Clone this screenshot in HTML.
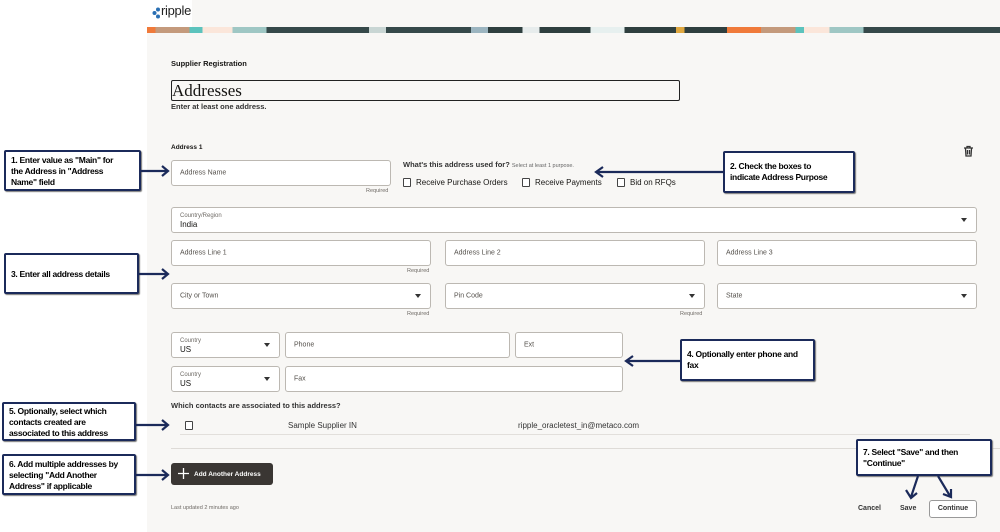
<!DOCTYPE html>
<html><head><meta charset="utf-8"><style>
*{margin:0;padding:0;box-sizing:border-box}
body{width:1000px;height:532px;position:relative;background:#fff;font-family:"Liberation Sans",sans-serif;overflow:hidden;color:#161513}
.a{position:absolute}
.pg{left:147px;top:0;width:853px;height:532px;background:#f8f7f5}
.in{position:absolute;background:#fff;border:1px solid #bcb8b2;border-radius:3px;font-size:7px;color:#55514c}
.in span{position:absolute;left:8px;top:50%;transform:translateY(-50%)}
.lab{position:absolute;left:8px;top:5px;font-size:6px;color:#6f6b66}
.val{position:absolute;left:8px;top:12px;font-size:8px;color:#161513}
.dd{position:absolute;right:9px;top:50%;transform:translateY(-50%);width:0;height:0;border-left:3px solid transparent;border-right:3px solid transparent;border-top:4px solid #333}
.req{position:absolute;font-size:5.5px;color:#6f6b66}
.co{position:absolute;background:#fff;border:2px solid #1b2a5a;border-radius:2px;font-size:8.5px;letter-spacing:-0.3px;font-weight:bold;line-height:11px;padding:3px 5px;color:#000;box-shadow:1px 1px 1px #777;white-space:nowrap}
.cb{position:absolute;width:8px;height:9px;border:1px solid #444;border-radius:1px;background:#fff}
.t{position:absolute;font-size:8px;white-space:nowrap}
</style></head><body>
<div class="a pg"></div>
<div class="a" style="left:147px;top:0;width:45px;height:27px;background:#fff"></div>
<svg class="a" style="left:152px;top:7px" width="9" height="12"><g fill="#2a6fb3"><circle cx="6" cy="2.5" r="2"/><circle cx="2.5" cy="6" r="2"/><circle cx="6" cy="9.5" r="2"/></g></svg>
<div class="a" style="left:161px;top:3px;font-size:13px;color:#222;letter-spacing:-0.3px">ripple</div>
<div class="a" style="left:147px;top:27px;width:853px;height:6px;background:linear-gradient(90deg,#f07a3a 0 1%,#c49a7c 1% 5%,#5cc3bd 5% 6.5%,#fbe6da 6.5% 10%,#9fc7c4 10% 14%,#36494a 14% 26%,#c9d6d4 26% 28%,#36494a 28% 38%,#9cb5c0 38% 40%,#2f3f3f 40% 44%,#e7ecec 44% 46%,#2f3f3f 46% 52%,#e7f0ef 52% 56%,#2f3f3f 56% 62%,#e0a840 62% 63%,#2f3f3f 63% 68%,#f07a3a 68% 72%,#c49a7c 72% 76%,#5cc3bd 76% 77%,#fbe6da 77% 80%,#9fc7c4 80% 84%,#36494a 84% 100%)"></div>
<div class="t" style="left:171px;top:59px;font-weight:bold;font-size:7.5px">Supplier Registration</div>
<div class="a" style="left:171px;top:80px;width:509px;height:21px;border:1px solid #222;border-radius:2px;font-family:'Liberation Serif',serif;font-size:17px;line-height:19px">Addresses</div>
<div class="t" style="left:171px;top:102px;font-size:7.5px;font-weight:bold;color:#333">Enter at least one address.</div>
<div class="t" style="left:171px;top:144px;font-size:6.5px;font-weight:bold">Address 1</div>
<svg class="a" style="left:963px;top:145px" width="11" height="12" fill="none" stroke="#333" stroke-width="1.3"><path d="M1 3H10M4 3V1.5H7V3M2.5 3.5L3 11H8L8.5 3.5M4.5 5V9.5M6.5 5V9.5"/></svg>
<div class="in" style="left:171px;top:160px;width:220px;height:26px"><span>Address Name</span></div>
<div class="req" style="left:366px;top:188px">Required</div>
<div class="t" style="left:403px;top:160px;font-size:7.5px;font-weight:bold;color:#333">What's this address used for? <span style="font-weight:normal;font-size:5.5px;color:#666">Select at least 1 purpose.</span></div>
<div class="cb" style="left:403px;top:178px"></div><div class="t" style="left:416px;top:178px">Receive Purchase Orders</div>
<div class="cb" style="left:522px;top:178px"></div><div class="t" style="left:535px;top:178px">Receive Payments</div>
<div class="cb" style="left:617px;top:178px"></div><div class="t" style="left:630px;top:178px">Bid on RFQs</div>
<div class="in" style="left:171px;top:207px;width:806px;height:26px"><div class="lab">Country/Region</div><div class="val">India</div><div class="dd"></div></div>
<div class="in" style="left:171px;top:240px;width:260px;height:26px"><span>Address Line 1</span></div>
<div class="in" style="left:445px;top:240px;width:260px;height:26px"><span>Address Line 2</span></div>
<div class="in" style="left:717px;top:240px;width:260px;height:26px"><span>Address Line 3</span></div>
<div class="req" style="left:407px;top:268px">Required</div>
<div class="in" style="left:171px;top:283px;width:260px;height:26px"><span>City or Town</span><div class="dd"></div></div>
<div class="in" style="left:445px;top:283px;width:260px;height:26px"><span>Pin Code</span><div class="dd"></div></div>
<div class="in" style="left:717px;top:283px;width:260px;height:26px"><span>State</span><div class="dd"></div></div>
<div class="req" style="left:407px;top:311px">Required</div>
<div class="req" style="left:680px;top:311px">Required</div>
<div class="in" style="left:171px;top:332px;width:109px;height:26px"><div class="lab">Country</div><div class="val">US</div><div class="dd"></div></div>
<div class="in" style="left:285px;top:332px;width:225px;height:26px"><span>Phone</span></div>
<div class="in" style="left:515px;top:332px;width:108px;height:26px"><span>Ext</span></div>
<div class="in" style="left:171px;top:366px;width:109px;height:26px"><div class="lab">Country</div><div class="val">US</div><div class="dd"></div></div>
<div class="in" style="left:285px;top:366px;width:338px;height:26px"><span>Fax</span></div>
<div class="t" style="left:171px;top:401px;font-size:7.5px;font-weight:bold;color:#333">Which contacts are associated to this address?</div>
<div class="cb" style="left:185px;top:421px"></div>
<div class="t" style="left:288px;top:421px;color:#333">Sample Supplier IN</div>
<div class="t" style="left:518px;top:421px;color:#333">ripple_oracletest_in@metaco.com</div>
<div class="a" style="left:180px;top:434px;width:790px;height:1px;background:#e2dfdb"></div>
<div class="a" style="left:171px;top:448px;width:829px;height:1px;background:#dedbd7"></div>
<div class="a" style="left:171px;top:463px;width:102px;height:22px;background:#3a3633;border-radius:3px;color:#fff;font-size:6.5px;font-weight:bold"><svg class="a" style="left:7px;top:5px" width="11" height="11" stroke="#fff" stroke-width="1.3"><path d="M5.5 0V11M0 5.5H11"/></svg><span style="position:absolute;left:23px;top:8px">Add Another Address</span></div>
<div class="t" style="left:171px;top:505px;font-size:5.5px;color:#6f6b66">Last updated 2 minutes ago</div>
<div class="t" style="left:858px;top:505px;font-size:7px;font-weight:bold;color:#333">Cancel</div>
<div class="t" style="left:900px;top:505px;font-size:7px;font-weight:bold;color:#333">Save</div>
<div class="a" style="left:929px;top:500px;width:48px;height:18px;border:1px solid #999;border-radius:3px;background:#fff;font-size:7px;font-weight:bold;color:#333;text-align:center;line-height:16px">Continue</div>
<div class="co" style="left:4px;top:150px;width:137px;height:41px">1. Enter value as "Main" for<br>the Address in "Address<br>Name" field</div>
<div class="co" style="left:723px;top:151px;width:132px;height:42px;padding-top:8px">2. Check the boxes to<br>indicate Address Purpose</div>
<div class="co" style="left:4px;top:253px;width:135px;height:41px;padding-top:14px">3. Enter all address details</div>
<div class="co" style="left:680px;top:339px;width:135px;height:42px;padding-top:8px">4. Optionally enter phone and<br>fax</div>
<div class="co" style="left:2px;top:402px;width:134px;height:39px;padding-top:2px">5. Optionally, select which<br>contacts created are<br>associated to this address</div>
<div class="co" style="left:2px;top:454px;width:134px;height:41px;padding-top:3px">6. Add multiple addresses by<br>selecting "Add Another<br>Address" if applicable</div>
<div class="co" style="left:856px;top:439px;width:136px;height:37px;padding-top:6px">7. Select "Save" and then<br>"Continue"</div>
<svg class="a" style="left:0;top:0" width="1000" height="532" fill="none" stroke="#1b2a5a" stroke-width="2.2">
<path d="M141 171H167M162 166L168 171L162 176"/>
<path d="M723 172H597M603 167L596 172L603 177"/>
<path d="M139 274H167M162 269L168 274L162 279"/>
<path d="M680 361H627M633 356L626 361L633 366"/>
<path d="M136 425H167M162 420L168 425L162 430"/>
<path d="M136 475H167M162 470L168 475L162 480"/>
<path d="M918 476L911 497M906 490L911 498L917 493"/>
<path d="M938 476L950 496M943 494L951 497L951 489"/>
</svg>
</body></html>
